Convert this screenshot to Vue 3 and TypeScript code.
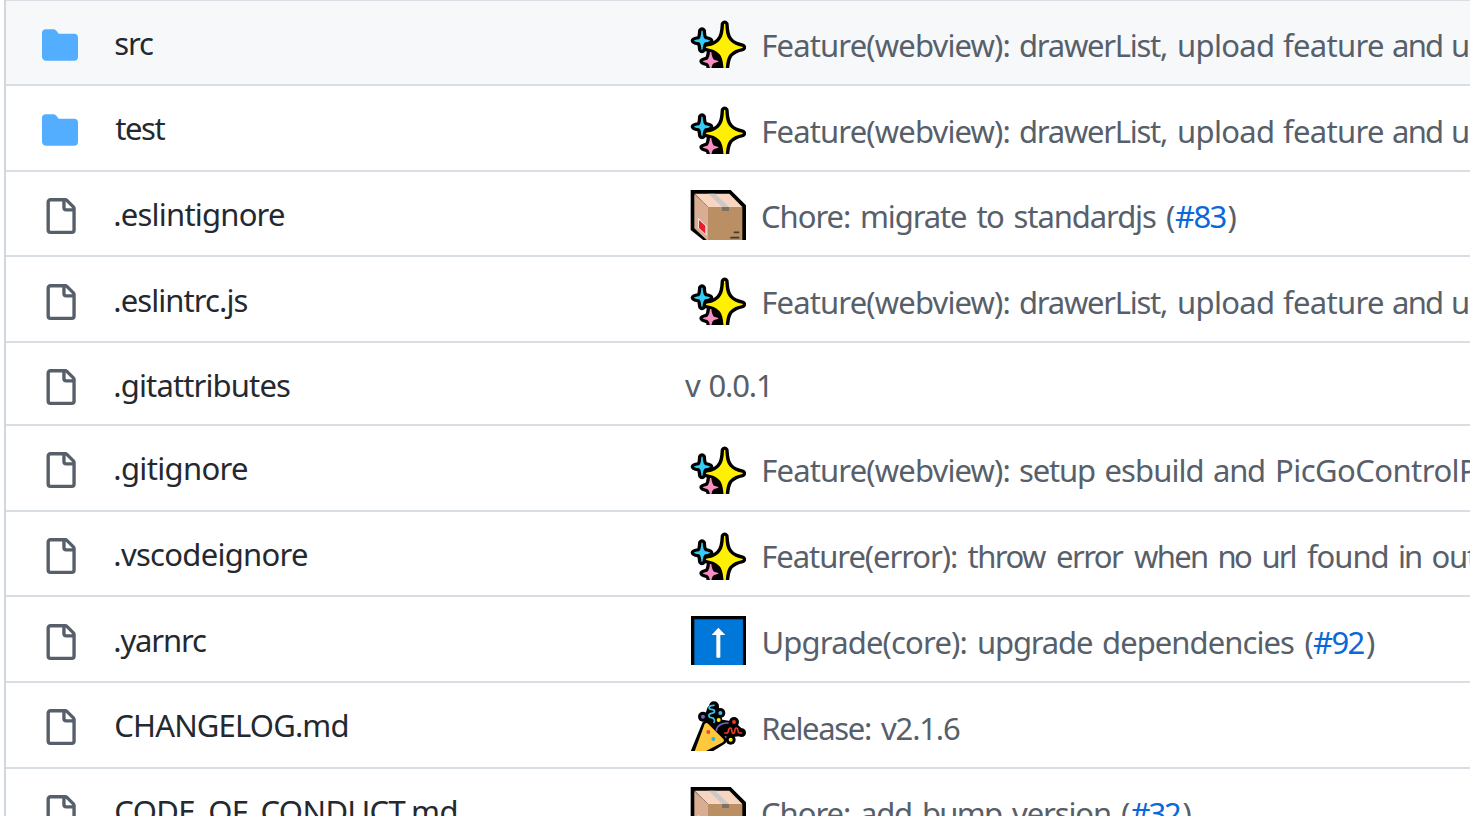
<script setup lang="ts">
type Emoji = 'sparkles' | 'package' | 'arrow' | 'party'

interface Segment {
  text: string
  x: number
  end: number
  link?: boolean
}

interface Row {
  kind: 'dir' | 'file'
  name: string
  nameEnd: number
  height: number
  emoji?: Emoji
  message: Segment[]
  iconDrop?: boolean
  raise?: boolean
}

const webview: Segment[] = [
  { text: 'Feature(webview):', x: 764.3, end: 1009.5 },
  { text: 'drawerList,', x: 1020, end: 1166 },
  { text: 'upload', x: 1179, end: 1273 },
  { text: 'feature', x: 1283, end: 1383 },
  { text: 'and', x: 1393, end: 1442 },
  { text: 'u', x: 1453, end: 1467 },
]

const rows: Row[] = [
  { kind: 'dir', name: 'src', nameEnd: 153, height: 85, emoji: 'sparkles', message: webview, raise: true },
  { kind: 'dir', name: 'test', nameEnd: 165.5, height: 86, emoji: 'sparkles', message: webview },
  {
    kind: 'file', name: '.eslintignore', nameEnd: 284, height: 85, emoji: 'package', raise: true,
    message: [
      { text: 'Chore:', x: 762, end: 850 },
      { text: 'migrate', x: 862, end: 966 },
      { text: 'to', x: 976.5, end: 1004 },
      { text: 'standardjs', x: 1014.5, end: 1156 },
      { text: '(', x: 1167, end: 1174 },
      { text: '#83', x: 1175, end: 1225.5, link: true },
      { text: ')', x: 1227.5, end: 1236 },
    ],
  },
  { kind: 'file', name: '.eslintrc.js', nameEnd: 247.5, height: 86, emoji: 'sparkles', message: webview, iconDrop: true },
  {
    kind: 'file', name: '.gitattributes', nameEnd: 290, height: 83,
    message: [
      { text: 'v', x: 685, end: 700 },
      { text: '0.0.1', x: 709.5, end: 767 },
    ],
  },
  {
    kind: 'file', name: '.gitignore', nameEnd: 247, height: 86, emoji: 'sparkles', raise: true,
    message: [
      { text: 'Feature(webview):', x: 764.3, end: 1009.5 },
      { text: 'setup', x: 1020, end: 1095 },
      { text: 'esbuild', x: 1105.5, end: 1202.5 },
      { text: 'and', x: 1214, end: 1264 },
      { text: 'PicGoControlP', x: 1278, end: 1477 },
    ],
  },
  {
    kind: 'file', name: '.vscodeignore', nameEnd: 307, height: 85, emoji: 'sparkles', raise: true,
    message: [
      { text: 'Feature(error):', x: 764.3, end: 957 },
      { text: 'throw', x: 967.5, end: 1047 },
      { text: 'error', x: 1057, end: 1124 },
      { text: 'when', x: 1134, end: 1207 },
      { text: 'no', x: 1219.5, end: 1252 },
      { text: 'url', x: 1263.5, end: 1295.5 },
      { text: 'found', x: 1307, end: 1387.5 },
      { text: 'in', x: 1400, end: 1421 },
      { text: 'out', x: 1432.5, end: 1478 },
    ],
  },
  {
    kind: 'file', name: '.yarnrc', nameEnd: 206, height: 86, emoji: 'arrow', iconDrop: true,
    message: [
      { text: 'Upgrade(core):', x: 763.5, end: 966.5 },
      { text: 'upgrade', x: 979, end: 1092 },
      { text: 'dependencies', x: 1103, end: 1294 },
      { text: '(', x: 1305.5, end: 1312 },
      { text: '#92', x: 1313, end: 1364.5, link: true },
      { text: ')', x: 1366, end: 1374 },
    ],
  },
  {
    kind: 'file', name: 'CHANGELOG.md', nameEnd: 347.5, height: 86, emoji: 'party',
    message: [
      { text: 'Release:', x: 764.3, end: 871 },
      { text: 'v2.1.6', x: 881, end: 960 },
    ],
  },
  {
    kind: 'file', name: 'CODE_OF_CONDUCT.md', nameEnd: 456.5, height: 86, emoji: 'package', raise: true,
    message: [
      { text: 'Chore:', x: 762, end: 850 },
      { text: 'add', x: 861, end: 911 },
      { text: 'bump', x: 924, end: 1002 },
      { text: 'version', x: 1012, end: 1110 },
      { text: '(', x: 1122, end: 1129 },
      { text: '#32', x: 1130.5, end: 1181, link: true },
      { text: ')', x: 1182.5, end: 1190.5 },
    ],
  },
]

const context = document.createElement('canvas').getContext('2d')!
context.font = '31px "Noto Sans"'

// Tracks a run of text so that its ink spans start..end, measured from the pen position.
function track(text: string, pen: number, start: number, end: number) {
  const m = context.measureText(text)
  const gaps = Math.max(1, text.length - 1)
  const ink = m.actualBoundingBoxLeft + m.actualBoundingBoxRight
  const spacing = text.length > 1 ? (end - start - ink) / gaps : 0
  return {
    style: { letterSpacing: spacing.toFixed(3) + 'px', marginLeft: (start + m.actualBoundingBoxLeft - pen).toFixed(2) + 'px' },
    pen: start + m.actualBoundingBoxLeft + m.width + spacing * text.length,
  }
}

function nameStyle(row: Row) {
  return track(row.name, 114, 115.3, row.nameEnd).style
}

function layout(row: Row) {
  let pen = row.emoji ? 746 : 684
  return row.message.map((segment) => {
    const t = track(segment.text, pen, segment.x, segment.end)
    pen = t.pen
    return { ...segment, style: t.style }
  })
}

const table = rows.map((row) => ({ ...row, nameStyle: nameStyle(row), segments: layout(row) }))

const sparkles = [
  { fill: '#35cdf5', d: 'M64 63Q66 60 68 63Q69 84 76 88Q90 90 90 92Q90 94 76 97Q69 100 68 118Q66 121 64 118Q63 100 57 97Q42 94 42 92Q42 90 57 88Q63 84 64 63Z' },
  { fill: '#f78fc2', d: 'M90 126H94Q96 144 102 149Q116 152 116 154Q116 156 102 159Q96 162 94 176H90Q88 162 82 159Q68 156 68 154Q68 152 82 149Q88 144 90 126Z' },
  { fill: '#ffef00', d: 'M132 43Q134 40 136 43C137 68 140 82 150 92C160 103 172 107 187 110Q190 112 187 114C172 117 160 122 150 132C142 141 139 154 137 180H131C129 154 126 141 118 132C108 122 96 117 79 114Q76 112 79 110C96 107 108 103 118 92C128 82 131 68 132 43Z' },
]
</script>

<template>
  <main class="viewport">
    <div class="files">
      <div
        v-for="(row, i) in table"
        :key="row.name"
        class="row"
        :class="{ active: i === 0, drop: row.iconDrop, raise: row.raise }"
        :style="{ height: row.height + 'px' }"
      >
        <div class="icon">
          <svg v-if="row.kind === 'dir'" viewBox="0 0 16 16" fill="#54aeff">
            <path d="M1.75 1A1.75 1.75 0 0 0 0 2.75v10.5C0 14.216.784 15 1.75 15h12.5A1.75 1.75 0 0 0 16 13.25v-8.5A1.75 1.75 0 0 0 14.25 3H7.5a.25.25 0 0 1-.2-.1l-.9-1.2C6.07 1.26 5.55 1 5 1H1.75Z" />
          </svg>
          <svg v-else viewBox="0 0 16 16" fill="#57606a">
            <path d="M2 1.75C2 .784 2.784 0 3.75 0h6.586c.464 0 .909.184 1.237.513l2.914 2.914c.329.328.513.773.513 1.237v9.586A1.75 1.75 0 0 1 13.25 16h-9.5A1.75 1.75 0 0 1 2 14.25V1.75Zm1.75-.25a.25.25 0 0 0-.25.25v12.5c0 .138.112.25.25.25h9.5a.25.25 0 0 0 .25-.25V6h-2.75A1.75 1.75 0 0 1 9 4.25V1.5H3.75Zm6.75.062V4.25c0 .138.112.25.25.25h2.688l-.011-.013-2.914-2.914-.013-.011Z" />
          </svg>
        </div>
        <div class="name"><span :style="row.nameStyle">{{ row.name }}</span></div>
        <div class="message" :class="{ plain: !row.emoji }">
          <svg v-if="row.emoji === 'sparkles'" class="emoji" viewBox="30 24 168 150">
            <g stroke="#000" stroke-width="20" stroke-linejoin="round">
              <path v-for="s in sparkles" :key="s.fill" :d="s.d" />
              <path d="M104 130L124 150V180H104Z" />
            </g>
            <path v-for="s in sparkles" :key="s.fill" :fill="s.fill" :d="s.d" />
          </svg>
          <svg v-else-if="row.emoji === 'package'" class="emoji" viewBox="30 30 168 150">
            <path d="M32 30H152L198 76V190H82L32 150Z" />
            <path fill="#f7d5c1" d="M44 41H148L187 81H84Z" />
            <path fill="#d9ad91" d="M43 42L84 81V180H80L43 145Z" />
            <path fill="#b98f63" d="M84 81H187V180H84Z" />
            <path fill="#cbc8c5" d="M86 41H105L147 81H126Z" />
            <path fill="#7d7064" d="M126 81H147V93H126Z" />
            <path fill="#f0e4de" d="M54 113L80 137V167L54 144Z" />
            <path fill="#ec1c2e" d="M57 120L76 137V161L57 144Z" />
            <path stroke="#443b33" stroke-width="5" stroke-linecap="round" d="M163 157H176M153 173H176" />
          </svg>
          <svg v-else-if="row.emoji === 'arrow'" class="emoji" viewBox="30 30 168 150">
            <path d="M33 33H198V180H33Z" />
            <path fill="#0078d9" stroke="#064a83" stroke-width="1.5" d="M43 43H189V182H43Z" />
            <path fill="#fff" d="M115 68L136 90H121V157Q115 161 109 157V90H95Z" />
          </svg>
          <svg v-else-if="row.emoji === 'party'" class="emoji" viewBox="30 33 168 150">
            <g stroke="#000" stroke-width="20" stroke-linejoin="round" stroke-linecap="round">
              <path d="M76 103Q80 101 84 103L128 147Q131 152 126 155L76 186H42Z" />
              <path d="M92 56L84 80L90 102L112 125L150 132L184 128L169 114L144 102L118 98L112 66L104 48Z" />
            </g>
            <circle cx="69" cy="80" r="15" />
            <circle cx="102" cy="49" r="15" />
            <circle cx="121" cy="69" r="15" />
            <circle cx="162" cy="96" r="15" />
            <circle cx="185" cy="128" r="13" />
            <circle cx="152" cy="149" r="15" />
            <path fill="#ffc83d" d="M74 102Q79 96 85 102L130 147Q135 154 126 158L76 184H44Z" />
            <path fill="none" stroke="#40bfe8" stroke-width="5" stroke-linecap="round" d="M102 46C84 46 84 57 94 58C107 59 106 69 95 70C84 71 84 82 94 83C105 84 104 94 102 97" />
            <path fill="none" stroke="#7561c9" stroke-width="5" stroke-linecap="round" d="M109 121C111 107 126 98 144 99" />
            <path fill="none" stroke="#e63c22" stroke-width="5" stroke-linecap="round" stroke-linejoin="round" d="M134 129H140C148 129 143 114 151 114C159 114 152 130 160 130C168 130 161 114 169 114C177 114 171 129 179 129H185" />
            <circle cx="69" cy="80" r="6" fill="#7561c9" />
            <circle cx="121" cy="69" r="6" fill="#40bfe8" />
            <circle cx="116" cy="90" r="6" fill="#fff100" />
            <circle cx="162" cy="96" r="6" fill="#e63c22" />
            <circle cx="152" cy="149" r="6" fill="#fff100" />
            <circle cx="85" cy="126" r="6" fill="#f04a24" />
            <circle cx="100" cy="147" r="6" fill="#28b7df" />
          </svg>
          <span
            v-for="(segment, n) in row.segments"
            :key="n"
            :class="{ link: segment.link }"
            :style="segment.style"
          >{{ segment.text }}</span>
        </div>
      </div>
    </div>
  </main>
</template>

<style>
body {
  background: #fff;
}
</style>

<style scoped>
.viewport {
  box-sizing: border-box;
  width: 1470px;
  height: 816px;
  padding-left: 4px;
  overflow: hidden;
}

.files {
  margin-top: -1px;
  border-left: 2px solid #d0d7de;
  font: 31px/42px "Noto Sans", sans-serif;
}

.row {
  display: flex;
  align-items: flex-start;
  box-sizing: border-box;
  border-top: 2px solid #d8dee4;
  overflow: hidden;
}

.active {
  background: #f6f8fa;
}

.icon {
  flex: none;
  width: 72px;
  padding: 26px 0 0 36px;
}

.icon svg {
  display: block;
  width: 36px;
  height: 36px;
}

.name {
  flex: none;
  width: 570px;
  padding-top: 21px;
  color: #24292f;
  white-space: pre;
}

.name span {
  display: block;
}

.drop .icon {
  padding-top: 27px;
}

.drop .name {
  padding-top: 22px;
}

.message {
  display: flex;
  flex: none;
  align-items: flex-start;
  width: 786px;
  margin-left: 6px;
  padding-top: 18px;
  color: #57606a;
  white-space: pre;
}

.message span {
  flex: none;
  padding-top: 6px;
}

.raise .message span {
  padding-top: 5px;
}

.message.plain {
  margin-left: 0;
}

.message.plain span {
  padding-top: 3px;
}

.message .link {
  color: #0969da;
}

.emoji {
  display: block;
  flex: none;
  width: 56px;
  height: 50px;
}

.active .emoji {
  margin-top: -1px;
}
</style>
